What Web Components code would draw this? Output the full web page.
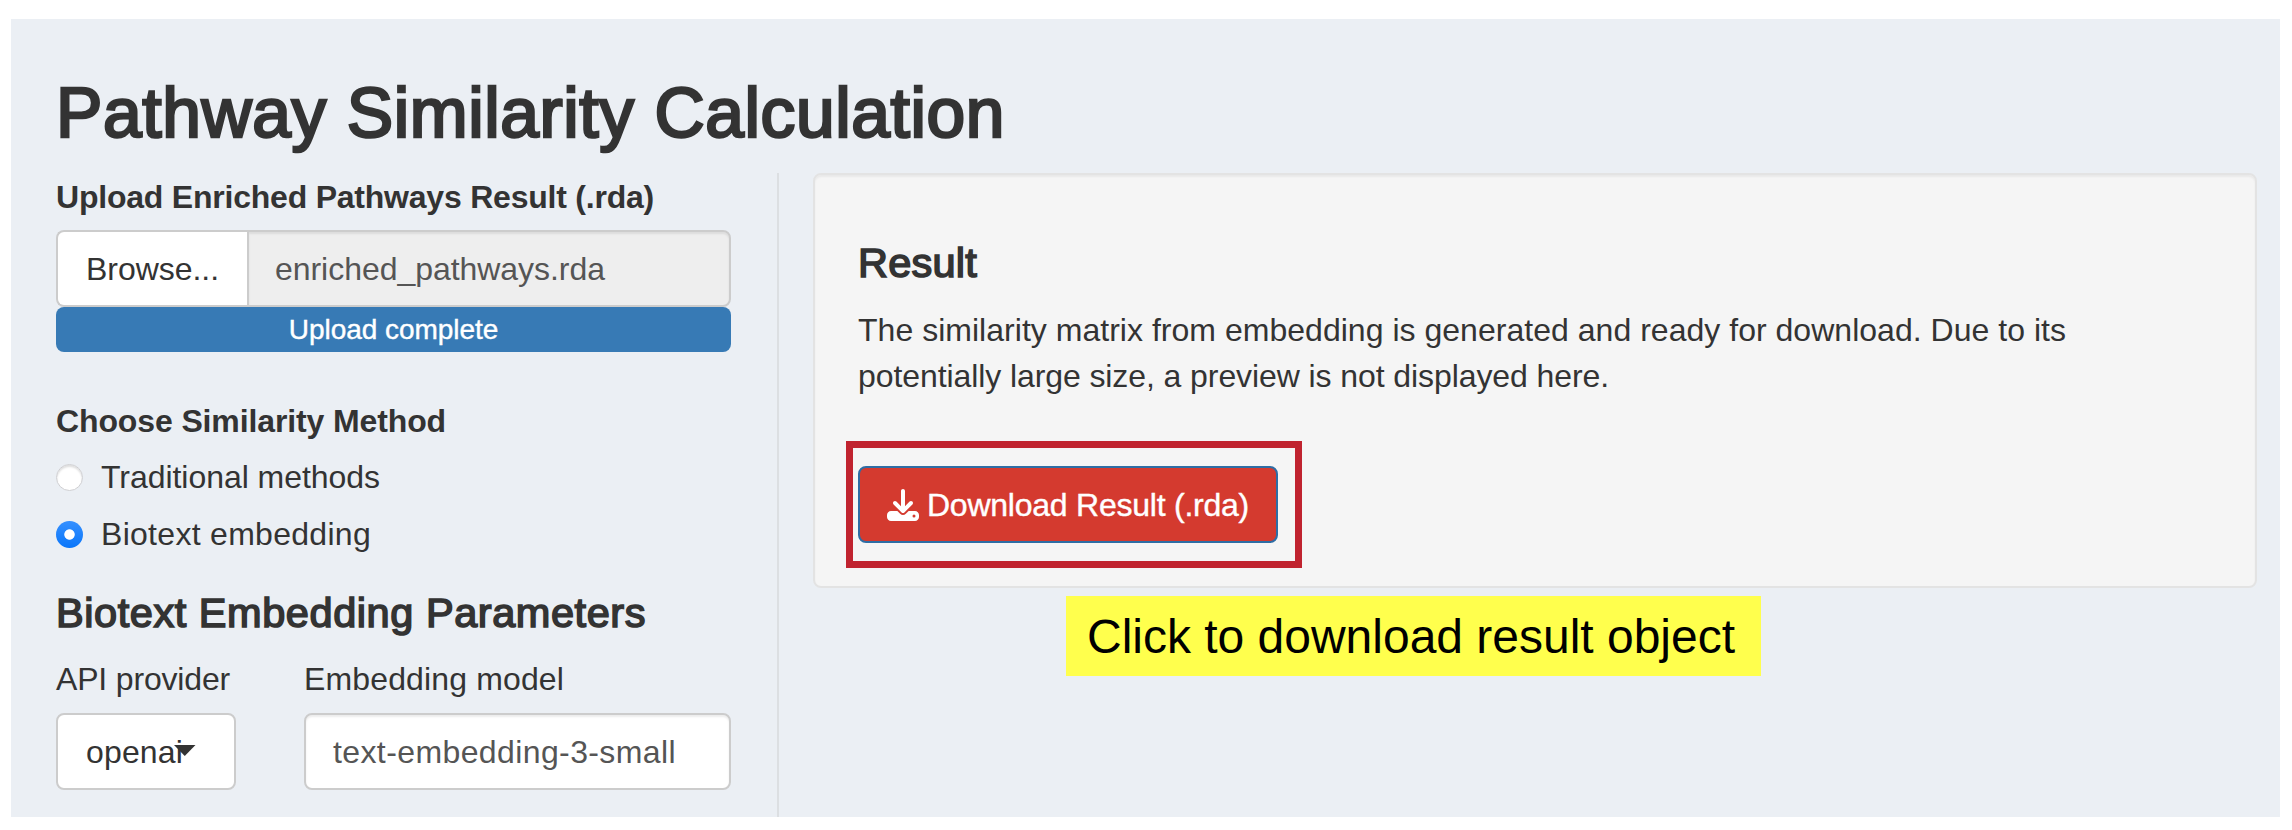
<!DOCTYPE html>
<html lang="en">
<head>
<meta charset="utf-8">
<title>Pathway Similarity Calculation</title>
<style>
body{margin:0;background:#fff;color:#333;font:32px/46px "Liberation Sans",Arial,Helvetica,sans-serif}
</style>
</head>
<body>
<pathway-app></pathway-app>
<script>
const define=(name,html,after)=>customElements.define(name,class extends HTMLElement{
  constructor(){super();this.attachShadow({mode:'open'}).innerHTML=html;}
  connectedCallback(){if(after)after(this,this.shadowRoot);}
});

// One line of text, tracked so that its advance equals the w attribute.
define('tracked-text',`<style>
:host{display:block;white-space:nowrap}
span{display:inline-block}
</style><span><slot></slot></span>`,(el,root)=>{
  const span=root.querySelector('span');
  const n=[...el.textContent].length;
  const natural=span.getBoundingClientRect().width;
  const want=+el.getAttribute('w');
  if(natural&&want)span.style.letterSpacing=((want-natural)/n).toFixed(4)+'px';
});

define('file-upload',`<style>
:host{display:block;margin-top:10px}
.group{display:flex;height:77px;box-sizing:border-box}
.browse,.name{box-sizing:border-box;border:2px solid #ccc;line-height:74px}
.browse{width:191px;padding-left:28px;background:#fff;border-radius:8px 0 0 8px;border-right:0}
.name{flex:1;padding-left:26px;background:#eee;color:#555;border-radius:0 8px 8px 0;box-shadow:inset 0 2px 2px rgba(0,0,0,.075)}
.bar{height:45px;border-radius:8px;background:#377ab5;color:#fff;font-size:28px;line-height:45px;display:flex;justify-content:center;-webkit-text-stroke:.4px #fff}
</style>
<div class="group"><div class="browse"><tracked-text w="133">Browse...</tracked-text></div>
<div class="name"><tracked-text w="330">enriched_pathways.rda</tracked-text></div></div>
<div class="bar"><tracked-text w="209.5">Upload complete</tracked-text></div>`);

define('radio-option',`<style>
:host{display:flex;align-items:center;gap:18px;height:46px;margin-bottom:11px}
i{box-sizing:border-box;width:27px;height:27px;border-radius:50%;background:#fff;border:1px solid #cfcfd2;box-shadow:inset 0 2px 2px rgba(0,0,0,.13)}
:host([checked]) i{border:0;box-shadow:none;background:radial-gradient(circle,#fff 0 4.8px,transparent 5.6px),linear-gradient(#3590ff,#0a76fa)}
</style><i></i><slot></slot>`);

define('select-box',`<style>
:host{display:block;box-sizing:border-box;height:77px;border:2px solid #ccc;border-radius:8px;background:#fff;padding-left:28px;line-height:75px;position:relative}
svg{position:absolute;left:116px;top:30px}
</style><slot></slot><svg width="22" height="12"><path d="M0 0H21.5L10.75 11Z" fill="#333"/></svg>`);

define('text-box',`<style>
:host{display:block;box-sizing:border-box;height:77px;border:2px solid #ccc;border-radius:8px;background:#fff;color:#555;padding-left:27px;line-height:75px;box-shadow:inset 0 2px 2px rgba(0,0,0,.075)}
</style><slot></slot>`);

define('form-field',`<style>
:host{display:block}
::slotted([slot=label]){margin-bottom:11px}
</style><slot name="label"></slot><slot></slot>`);

define('side-form',`<style>
:host{display:block;box-sizing:border-box;width:768px;padding:1px 46px 0 45px;border-right:2px solid #dcdfe2}
.b{font-weight:700}
.method{margin:46px 0 10px}
.h4{font-size:41.5px;margin-top:33px;-webkit-text-stroke:1.6px #333}
.fields{display:grid;grid-template-columns:180px 1fr;column-gap:68px;margin-top:20px}
</style>
<tracked-text class="b" w="598">Upload Enriched Pathways Result (.rda)</tracked-text>
<file-upload></file-upload>
<tracked-text class="b method" w="390">Choose Similarity Method</tracked-text>
<radio-option><tracked-text w="279">Traditional methods</tracked-text></radio-option>
<radio-option checked><tracked-text w="270">Biotext embedding</tracked-text></radio-option>
<tracked-text class="h4" w="590">Biotext Embedding Parameters</tracked-text>
<div class="fields">
<form-field><tracked-text slot="label" w="174">API provider</tracked-text><select-box><tracked-text w="97">openai</tracked-text></select-box></form-field>
<form-field><tracked-text slot="label" w="260">Embedding model</tracked-text><text-box><tracked-text w="343">text-embedding-3-small</tracked-text></text-box></form-field>
</div>`);

define('download-button',`<style>
:host{display:flex;box-sizing:border-box;width:420px;height:77px;align-items:center;padding-left:27px;gap:8px;border:2px solid #2e6da4;border-radius:8px;background:#d43a2f;color:#fff;position:relative;-webkit-text-stroke:.4px #fff}
svg{display:block}
.mark{position:absolute;left:-14px;top:-27px;width:442px;height:113px;border:7px solid #c0232f}
</style>
<svg width="32" height="32" viewBox="0 0 512 512" fill="#fff"><path stroke="none" d="M288 32c0-17.700-14.300-32-32-32s-32 14.300-32 32v242.700l-73.400-73.400c-12.500-12.500-32.800-12.500-45.300 0s-12.500 32.800 0 45.300l128 128c12.500 12.500 32.800 12.500 45.300 0l128-128c12.500-12.500 12.500-32.800 0-45.300s-32.800-12.500-45.300 0L288 274.700V32zM64 352c-35.300 0-64 28.700-64 64v32c0 35.300 28.700 64 64 64h384c35.300 0 64-28.700 64-64v-32c0-35.300-28.700-64-64-64H346.500l-45.300 45.300c-25 25-65.500 25-90.500 0L165.500 352H64zm368 56a24 24 0 1 1 0 48 24 24 0 1 1 0-48z"/></svg>
<tracked-text w="322">Download Result (.rda)</tracked-text><div class="mark"></div>`);

define('result-card',`<style>
:host{display:block;box-sizing:border-box;height:415px;padding:65px 43px 0;border:2px solid #e3e3e3;border-radius:8px;background:#f5f5f5;box-shadow:inset 0 2px 2px rgba(0,0,0,.05)}
.h4{font-size:41.5px;-webkit-text-stroke:1.6px #333}
.p{margin:22px 0 66.600px;line-height:45.7px}
</style>
<tracked-text class="h4" w="119">Result</tracked-text>
<div class="p"><tracked-text w="1208">The similarity matrix from embedding is generated and ready for download. Due to its</tracked-text>
<tracked-text w="751">potentially large size, a preview is not displayed here.</tracked-text></div>
<download-button></download-button>`);

define('callout-note',`<style>
:host{display:block;box-sizing:border-box;width:695px;height:80px;margin:8px 0 0 253px;padding-left:21px;background:#ffff4d;color:#000;font-size:48px;line-height:81px}
</style><slot></slot>`);

define('pathway-app',`<style>
:host{display:block;box-sizing:border-box;height:830px;padding:19px 12px 13px 11px}
main{display:flex;flex-direction:column;box-sizing:border-box;height:798px;padding-top:56px;background:#ebeff4}
.title{font-size:69.5px;line-height:76px;margin-left:45px;-webkit-text-stroke:2.6px #333}
.cols{display:flex;flex:1;margin-top:22px}
.right{flex:1;padding:0 23px 0 34px}
</style>
<main><tracked-text class="title" w="949">Pathway Similarity Calculation</tracked-text>
<div class="cols"><side-form></side-form>
<div class="right"><result-card></result-card><callout-note><tracked-text w="648">Click to download result object</tracked-text></callout-note></div></div></main>`);
</script>
</body>
</html>
